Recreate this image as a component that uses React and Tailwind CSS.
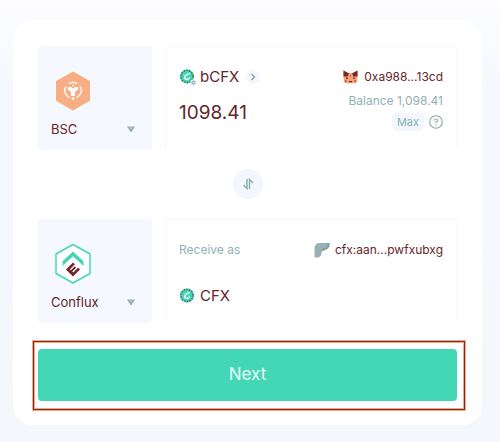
import React, { useState } from 'react';

function BscIcon() {
  return (
    <svg viewBox="0 0 36 42" className="h-[42px] w-9" aria-hidden="true">
      <path d="M18 2.5 34 11.6v18.6L18 39.5 2 30.2V11.6z" fill="#f8ae85" stroke="#f8ae85" strokeWidth="2" strokeLinejoin="round" />
      <g fill="none" stroke="#fff" strokeWidth="1.3">
        <path d="M13.8 13.8q4.2-3.4 8.4 0" />
        <path d="M11.2 16.3q-3.4 4 .2 8.8 1.2 1.6 3.2 2.3" />
        <path d="M24.8 16.3q3.4 4-.2 8.8-1.2 1.6-3.2 2.3" />
      </g>
      <path d="M13 17h3l2 1.5 2-1.5h3l.4 2.2-3.4 2.6v4.3h-4v-4.3l-3.400-2.600z" fill="#fff" />
      <circle cx="18" cy="28.6" r="1.3" fill="#fff" />
      <circle cx="18" cy="15.3" r=".9" fill="#fff" />
    </svg>
  );
}

function ConfluxIcon() {
  return (
    <svg viewBox="0 0 36 42" className="h-[42px] w-9" aria-hidden="true">
      <path d="M18 1.5 35 11v19.5L18 40 1 30.5V11z" fill="#fff" stroke="#44d7b6" strokeWidth="1.5" strokeLinejoin="round" />
      <path d="M18 8.5 28.5 18.3V23L18 13.200 7.500 23v-4.700z" fill="#44d7b6" />
      <path d="M-5-5H5v2.700H-2v1.300H3.500v2H-2v1.300H5V5H-5z" transform="translate(18 26.5) rotate(-45)" fill="#74282a" />
    </svg>
  );
}

function TokenIcon({ badge = false }) {
  return (
    <svg viewBox="0 0 18 18" className="-mr-1 h-[18px] w-[18px] shrink-0" aria-hidden="true">
      <circle cx="8" cy="8.5" r="7.2" fill="#44d7b6" />
      <circle cx="8" cy="8.5" r="6" fill="none" stroke="#74282a" strokeWidth="1.1" strokeDasharray="1.2 1.5" />
      <path d="M11 5 6.200 7.700l-.5 2.800 2.500 1 2.700-1.800" fill="none" stroke="#fff" strokeWidth="1.300" />
      {badge && (
        <>
          <circle cx="14.5" cy="14.5" r="3.2" fill="#e3eaf0" />
          <path d="m14.5 12.3 2.2 2.2-2.200 2.200-2.200-2.200z" fill="#8fa7aa" />
          <circle cx="14.5" cy="14.5" r=".8" fill="#fff" />
        </>
      )}
    </svg>
  );
}

function FoxIcon() {
  return (
    <svg viewBox="0 0 15 14" className="h-[14px] w-[15px]" aria-hidden="true">
      <path d="M.5.5 5.500 3h4l5-2.500v6L14 12.500l-3.500.7h-6L1 12.500.5 6.500z" fill="#f8a078" />
      <path d="M.5.5 6 3.500l-1.500 3H.5zM14.500.5 9 3.500l1.500 3h4z" fill="#74282a" />
      <path d="M3 7.500h2v1.200H3zM10 7.500h2v1.200h-2zM6 11h3v1.300H6zM2 10.500h1.500v1H2zM11.500 10.500H13v1h-1.500zM7 5.500h1v1H7z" fill="#74282a" />
    </svg>
  );
}

function PortalIcon() {
  return (
    <svg viewBox="0 0 16 16" className="h-4 w-4" aria-hidden="true">
      <path d="M.5 15.500V6Q1 1 6 1h9.500q.3 6-5.500 7.500-2.500.5-2.500 2.500 0 4-4 4.500z" fill="#99b1b5" />
      <path d="M11 1h4.500q.3 4-2.800 6Q14 3.500 11 1z" fill="#6bbcae" />
      <path d="M9.500 7.500Q14 6.500 14.800 2.500" fill="none" stroke="#74282a" strokeWidth="1" strokeDasharray="1 1.500" />
    </svg>
  );
}

function Network({ label, options, icon }) {
  return (
    <div className="h-[104px] w-[114px] shrink-0 rounded bg-[#f5f8fe] pt-6 pr-4 pl-[13px]">
      <div className="pl-1">{icon}</div>
      <div className="mt-[7px] grid items-center">
        <select aria-label={label} className="col-start-1 row-start-1 h-5 w-full appearance-none bg-transparent text-[13px] leading-5 outline-none">
          {options.map((name) => <option key={name}>{name}</option>)}
        </select>
        <svg viewBox="0 0 10 7" className="pointer-events-none col-start-1 row-start-1 h-[7px] w-[10px] justify-self-end" aria-hidden="true">
          <path d="M1 .5h8L5.500 6h-1z" fill="#8fb3b1" />
          <path d="M4 1.500h2v1.500H4z" fill="#e9b79c" />
        </svg>
      </div>
    </div>
  );
}

export default function App() {
  const [amount, setAmount] = useState('1098.41');
  return (
    <div className="min-h-screen bg-linear-to-b from-[#fdfdff] via-[#f5f8fe] via-20% to-[#f4f8fd] pt-5 pr-[18px] pb-4 pl-[13px] font-['Inter','Liberation_Sans',sans-serif] text-[#662529]">
      <main className="rounded-[20px] bg-white px-[25px] pt-[26px] pb-[15px]">
        <section className="flex gap-[13px]">
          <Network label="From network" options={['BSC', 'Ethereum']} icon={<BscIcon />} />
          <div className="flex min-w-0 flex-1 justify-between rounded border border-b-0 border-[#f6f8fd] px-[13px] pt-5">
            <div className="min-w-0">
              <button className="flex h-5 items-center gap-[7px] text-[15px] leading-5">
                <TokenIcon badge />
                <span>bCFX</span>
                <span className="flex h-[14px] w-[14px] items-center justify-center rounded-full bg-[#f3f7fd]">
                  <svg viewBox="0 0 6 8" className="h-2 w-[6px]" aria-hidden="true">
                    <path d="m1.500 1 3 3-3 3" fill="none" stroke="#7b9ba2" strokeWidth="1.200" />
                  </svg>
                </span>
              </button>
              <input aria-label="Amount" value={amount} onChange={(e) => setAmount(e.target.value)} className="mt-3 h-7 w-24 bg-transparent text-[19px] leading-7 outline-none" />
            </div>
            <div className="flex shrink-0 flex-col items-end text-xs">
              <div className="flex h-5 items-center gap-[6px]">
                <FoxIcon />
                <span>0xa988...13cd</span>
              </div>
              <p className="mt-1 leading-5 text-[#8fb1b5]">Balance 1,098.41</p>
              <div className="mt-[2px] flex items-center gap-[5px]">
                <button className="h-[18px] rounded bg-[#f3f7fd] px-[5px] text-[11px] leading-[18px] text-[#7fb3b1]">Max</button>
                <button aria-label="About the maximum amount">
                  <svg viewBox="0 0 14 14" className="h-[14px] w-[14px]" fill="none" stroke="#8aa9ad" strokeWidth="1.100" aria-hidden="true">
                    <circle cx="7" cy="7" r="6.300" />
                    <path d="M5.200 5.600Q5.400 4 7 4t1.800 1.500Q8.800 6.400 7 7v1.300M7 9.300v1.200" />
                  </svg>
                </button>
              </div>
            </div>
          </div>
        </section>

        <button aria-label="Swap direction" className="mx-auto mt-[19px] mb-5 flex h-[30px] w-[30px] items-center justify-center rounded-full bg-[#f3f7fd]">
          <svg viewBox="0 0 12 12" className="h-3 w-3" fill="none" stroke="#8bb0b0" strokeWidth="1.500" aria-hidden="true">
            <path d="M5 1v9.500L1.500 7M7.500 11V1.500L11 5" />
          </svg>
        </button>

        <section className="flex gap-[13px]">
          <Network label="To network" options={['Conflux', 'Ethereum']} icon={<ConfluxIcon />} />
          <div className="min-w-0 flex-1 rounded border border-b-0 border-[#f6f8fd] px-[13px] pt-5">
            <div className="flex h-5 items-center justify-between text-xs">
              <span className="text-[#8fb1b5]">Receive as</span>
              <div className="flex items-center gap-[5px]">
                <PortalIcon />
                <span>cfx:aan...pwfxubxg</span>
              </div>
            </div>
            <div className="mt-[26px] flex h-5 items-center gap-[7px] text-[15px] leading-5">
              <TokenIcon />
              <span>CFX</span>
            </div>
          </div>
        </section>

        <div className="mt-[18px] -mr-2 -ml-[5px] border border-[#7a2a26] pt-[7px] pr-[7px] pb-2 pl-1 shadow-[0_0_0_1px_#f6a880,inset_0_0_0_1px_#f6a880]">
          <button className="h-[52px] w-full rounded bg-[#44d7b6] text-[17px] text-[#ecf7fa]">Next</button>
        </div>
      </main>
    </div>
  );
}
